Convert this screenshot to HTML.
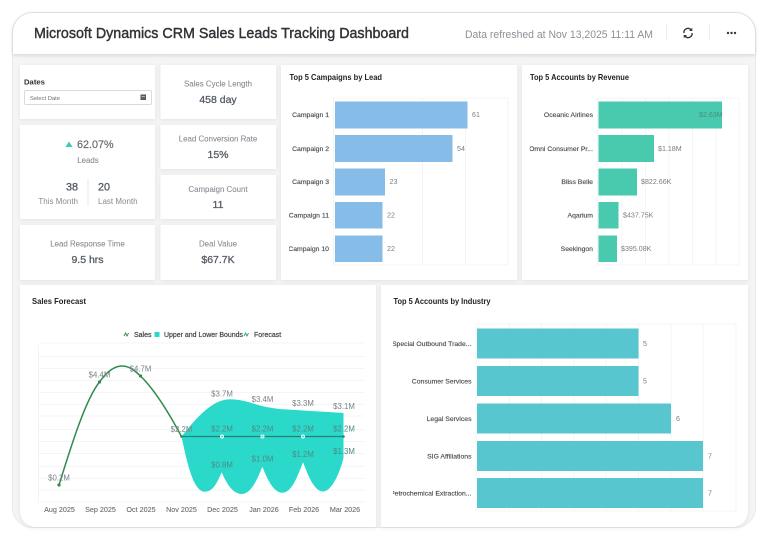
<!DOCTYPE html>
<html><head><meta charset="utf-8">
<style>
html,body{margin:0;padding:0;background:#fff;width:768px;height:538px;overflow:hidden}
svg{display:block;filter:blur(.35px)}
text{font-family:"Liberation Sans",sans-serif}
.c{fill:#fff;filter:drop-shadow(0 1px 2px rgba(0,0,0,.08))}
.k{fill:#868b91;font-size:7.900px;text-anchor:middle;stroke:#868b91;stroke-width:.08}
.v{fill:#565c64;font-size:10.500px;text-anchor:middle;stroke:#565c64;stroke-width:.3}
.h{fill:#1d1f22;font-size:8.400px;font-weight:bold}
.l{fill:#484c51;font-size:6.850px;text-anchor:end;stroke:#484c51;stroke-width:.15}
.n{fill:#797e83;font-size:7.100px}
.f{fill:#7d8287;font-size:7.800px;text-anchor:middle}
.x{fill:#63686d;font-size:7.200px;text-anchor:middle;stroke:#63686d;stroke-width:.08}
.g{stroke:#f1f2f3;stroke-width:.8;fill:none}
</style></head><body>
<svg width="768" height="538" viewBox="0 0 768 538" xmlns="http://www.w3.org/2000/svg">
<rect x="12.500" y="12.500" width="743" height="515" rx="20" fill="#f4f5f5" stroke="#e9eaea"/>
<path d="M13 54V32.500A19.500 19.500 0 0 1 32.500 13H735.500A19.500 19.500 0 0 1 755 32.500V54Z" fill="#fff" style="filter:drop-shadow(0 1px 2px rgba(0,0,0,.15))"/>
<text x="34" y="38" font-size="15" fill="#2f3337" stroke="#2f3337" stroke-width=".42" textLength="375" lengthAdjust="spacingAndGlyphs">Microsoft Dynamics CRM Sales Leads Tracking Dashboard</text>
<text x="465" y="38" font-size="10.800" fill="#8c9196" textLength="188" lengthAdjust="spacingAndGlyphs">Data refreshed at Nov 13,2025 11:11 AM</text>
<path d="M666.500 24V41M709.500 24V41" stroke="#eff0f0"/>
<g fill="none" stroke="#33373b" stroke-width="1.400">
<path d="M684 33A4 4 0 0 1 691 29.800"/><path d="M692 33A4 4 0 0 1 685 36.200"/>
</g>
<path d="M692.300 27.800V31H689ZM683.700 38.200V35H687Z" fill="#33373b"/>
<g fill="#33373b"><circle cx="728" cy="33" r="1.200"/><circle cx="731.500" cy="33" r="1.200"/><circle cx="735" cy="33" r="1.200"/></g>

<g>
<rect class="c" x="20" y="65" width="135" height="54"/>
<rect class="c" x="160.500" y="65" width="115.500" height="54"/>
<rect class="c" x="20" y="125" width="135" height="94"/>
<rect class="c" x="160.500" y="125" width="115.500" height="44"/>
<rect class="c" x="160.500" y="175" width="115.500" height="44"/>
<rect class="c" x="20" y="225" width="135" height="55"/>
<rect class="c" x="160.500" y="225" width="115.500" height="55"/>
<rect class="c" x="281" y="65" width="236" height="215"/>
<rect class="c" x="522" y="65" width="226" height="215"/>
<path class="c" d="M20 285H376V527H36A16 16 0 0 1 20 511Z"/>
<path class="c" d="M381 285H748V511A16 16 0 0 1 732 527H381Z"/>
</g>

<text x="24" y="84.500" font-size="7.700" font-weight="bold" fill="#2c2f33">Dates</text>
<rect x="24.500" y="90.500" width="127" height="14" rx="1.500" fill="#fff" stroke="#d8dadc"/>
<text x="30" y="100" font-size="5.800" fill="#6a6f74">Select Date</text>
<path d="M140.500 94.500h5.500v5.500h-5.500z" fill="#54585c"/><path d="M141.500 96.500h3.500M142 98h.6M143.800 98h.6" stroke="#fff" stroke-width=".5"/>

<text class="k" x="218" y="86.500">Sales Cycle Length</text><text class="v" x="218" y="103">458 day</text>
<text class="k" x="218" y="141.500">Lead Conversion Rate</text><text class="v" x="218" y="158">15%</text>
<text class="k" x="218" y="192">Campaign Count</text><text class="v" x="218" y="208">11</text>
<text class="k" x="218" y="246.500">Deal Value</text><text class="v" x="218" y="263">$67.7K</text>
<text class="k" x="87.500" y="246.500">Lead Response Time</text><text class="v" x="87.500" y="263">9.5 hrs</text>

<path d="M69 141.500L72.500 147H65.500Z" fill="#3ec9b4"/>
<text x="77" y="148" font-size="10.800" fill="#62676d" stroke="#62676d" stroke-width=".15">62.07%</text>
<text class="k" x="88" y="163">Leads</text>
<text x="78" y="190.500" font-size="10.800" fill="#565c64" stroke="#565c64" stroke-width=".3" text-anchor="end">38</text>
<text x="98" y="190.500" font-size="10.800" fill="#565c64" stroke="#565c64" stroke-width=".3">20</text>
<text x="78" y="204" font-size="8" fill="#868b91" text-anchor="end">This Month</text>
<text x="98" y="204" font-size="8" fill="#868b91">Last Month</text>
<path d="M88 179V206" stroke="#e6e7e8"/>

<!-- Campaigns -->
<text class="h" x="289.500" y="80" textLength="92.500" lengthAdjust="spacingAndGlyphs">Top 5 Campaigns by Lead</text>
<path class="g" d="M333.500 98H508V265H333.500ZM422.500 98V265M465.500 98V265"/>
<g fill="#85bde8">
<rect x="335" y="101.500" width="132.500" height="27"/><rect x="335" y="135" width="117.500" height="27"/><rect x="335" y="168.500" width="50" height="27"/><rect x="335" y="202" width="47.500" height="26.500"/><rect x="335" y="235.500" width="47.500" height="26.500"/>
</g>
<text class="l" x="329" y="117">Campaign 1</text><text class="l" x="329" y="151">Campaign 2</text><text class="l" x="329" y="184">Campaign 3</text><text class="l" x="329" y="217.500">Campaign 11</text><text class="l" x="329" y="251">Campaign 10</text>
<rect x="281.500" y="205" width="7.500" height="50" fill="#fff"/>
<text class="n" x="472" y="117">61</text><text class="n" x="457" y="151">54</text><text class="n" x="389.500" y="184">23</text><text class="n" x="387" y="217.500">22</text><text class="n" x="387" y="251">22</text>

<!-- Revenue -->
<text class="h" x="530" y="80" textLength="99" lengthAdjust="spacingAndGlyphs">Top 5 Accounts by Revenue</text>
<path class="g" d="M597.500 98H739V265H597.500ZM622 98V265M645.500 98V265M669 98V265M692.500 98V265M716 98V265"/>
<g fill="#49c9ad">
<rect x="598.500" y="101.500" width="123.500" height="27"/><rect x="598.500" y="135" width="55.500" height="27"/><rect x="598.500" y="168.500" width="38.500" height="27"/><rect x="598.500" y="202" width="20" height="26.500"/><rect x="598.500" y="235.500" width="18.500" height="26.500"/>
</g>
<text class="l" x="593" y="117">Oceanic Airlines</text><text class="l" x="593" y="151">Omni Consumer Pr...</text><text class="l" x="593" y="184">Bliss Belle</text><text class="l" x="593" y="217.500">Aqarium</text><text class="l" x="593" y="251">Seekingon</text>
<rect x="522.200" y="143" width="7.600" height="12" fill="#fff"/>
<text class="n" x="699" y="117" style="fill:#4a8f7f">$2.63M</text><text class="n" x="658" y="151">$1.18M</text><text class="n" x="641" y="184">$822.66K</text><text class="n" x="623" y="217.500">$437.75K</text><text class="n" x="621" y="251">$395.08K</text>

<!-- Forecast -->
<text class="h" x="32" y="304" textLength="54" lengthAdjust="spacingAndGlyphs">Sales Forecast</text>
<path d="M124 336l1.500-3 1.500 3 1.500-3" fill="none" stroke="#2f8a4d" stroke-width=".9"/>
<text x="134" y="337" font-size="7" fill="#44484d" stroke="#44484d" stroke-width=".22">Sales</text>
<rect x="154.500" y="332" width="5" height="5" fill="#2bd8c8"/>
<text x="164" y="337" font-size="7" fill="#44484d" stroke="#44484d" stroke-width=".22" textLength="79" lengthAdjust="spacingAndGlyphs">Upper and Lower Bounds</text>
<path d="M244 336l1.500-3 1.500 3 1.500-3" fill="none" stroke="#2a9d85" stroke-width=".9"/>
<text x="254" y="337" font-size="7" fill="#44484d" stroke="#44484d" stroke-width=".22">Forecast</text>

<path class="g" d="M38.500 502V347Q38.500 343 42 343H364M38 356.700H364M38 368.300H364M38 380.300H364M38 392.300H364M38 404.300H364M38 416H364M38 429.300H364M38 441.300H364M38 453.300H364M38 466.300H364M38 478.300H364M38 490H364M38 502H364"/>
<path d="M181.500 436.500C192 424 210 399.300 230 399.300C242 399.300 250 403 262 406C275 409.500 290 409.500 303 410.500C318 411.500 330 412 343.500 413V458C340 472 332 491.500 323 491.500C314 491.500 308 475 303 462.300C298 475 292 492.700 282.700 492.700C273 492.700 267 478 262.300 466.700C257 480 251 494 241.700 494C232 494 226 482 221.700 472.300C217 483 213 491.700 205 491.700C193 491.700 187 462 181.500 436.500Z" fill="#2bd9cb"/>
<path d="M59 485C70 450 85 400 99.500 382C108 370 116 366 122 366C130 366 135 371 140.500 376C155 390 170 415 181.500 436.500" fill="none" stroke="#2f8a4d" stroke-width="1.500"/>
<path d="M181.500 436.500H343.500" stroke="#2b8074" stroke-width="1.200"/>
<g fill="#2f8a4d"><circle cx="59" cy="485" r="1.600"/><circle cx="99.500" cy="382" r="1.600"/><circle cx="140.500" cy="376" r="1.600"/><circle cx="181.500" cy="436.500" r="1.300"/><circle cx="343.500" cy="436.500" r="1.300" fill="#2b8074"/></g>
<g fill="#2bd9cb" stroke="#fff" stroke-width="1"><circle cx="222" cy="436.500" r="1.500"/><circle cx="262.500" cy="436.500" r="1.500"/><circle cx="303" cy="436.500" r="1.500"/></g>
<g>
<text class="f" x="59" y="480.500">$0.2M</text><text class="f" x="99.500" y="377.500">$4.4M</text><text class="f" x="140.500" y="371.500">$4.7M</text><text class="f" x="181.500" y="432">$2.2M</text>
<text class="f" x="222" y="396.500">$3.7M</text><text class="f" x="262.500" y="402">$3.4M</text><text class="f" x="303" y="406">$3.3M</text><text class="f" x="344" y="409">$3.1M</text>
<text class="f" x="222" y="431.500" style="fill:#4e8a84">$2.2M</text><text class="f" x="262.500" y="431.500" style="fill:#4e8a84">$2.2M</text><text class="f" x="303" y="431.500" style="fill:#4e8a84">$2.2M</text><text class="f" x="344" y="431.500" style="fill:#4e8a84">$2.2M</text>
<text class="f" x="222" y="467.500" style="fill:#4e8a84">$0.8M</text><text class="f" x="262.500" y="461.500" style="fill:#4e8a84">$1.0M</text><text class="f" x="303" y="457" style="fill:#4e8a84">$1.2M</text><text class="f" x="344" y="454" style="fill:#4e8a84">$1.3M</text>
</g>
<text class="x" x="59.500" y="512">Aug 2025</text><text class="x" x="100.500" y="512">Sep 2025</text><text class="x" x="141" y="512">Oct 2025</text><text class="x" x="181.500" y="512">Nov 2025</text><text class="x" x="222.500" y="512">Dec 2025</text><text class="x" x="264" y="512">Jan 2026</text><text class="x" x="304" y="512">Feb 2026</text><text class="x" x="345" y="512">Mar 2026</text>

<!-- Industry -->
<text class="h" x="393.500" y="304" textLength="97" lengthAdjust="spacingAndGlyphs">Top 5 Accounts by Industry</text>
<path class="g" d="M476 324H736V511H476ZM509.500 324V511M541.500 324V511M574 324V511M606 324V511M638.500 324V511M671 324V511M703 324V511"/>
<g fill="#58c6cf">
<rect x="477" y="328.500" width="161.500" height="30"/><rect x="477" y="366" width="161.500" height="30"/><rect x="477" y="403.500" width="194" height="30"/><rect x="477" y="441" width="226" height="30"/><rect x="477" y="478" width="226" height="30"/>
</g>
<text class="l" x="471.500" y="346">Special Outbound Trade...</text><text class="l" x="471.500" y="383.500">Consumer Services</text><text class="l" x="471.500" y="421">Legal Services</text><text class="l" x="471.500" y="458.500">SIG Affiliations</text><text class="l" x="471.500" y="495.500">Petrochemical Extraction...</text>
<rect x="381.200" y="338" width="11.800" height="12" fill="#fff"/><rect x="381.200" y="488" width="11.800" height="11" fill="#fff"/>
<text class="n" x="643" y="346">5</text><text class="n" x="643" y="383.500">5</text><text class="n" x="676" y="421">6</text><text class="n" x="708" y="458.500">7</text><text class="n" x="708" y="495.500">7</text>
</svg>
</body></html>
